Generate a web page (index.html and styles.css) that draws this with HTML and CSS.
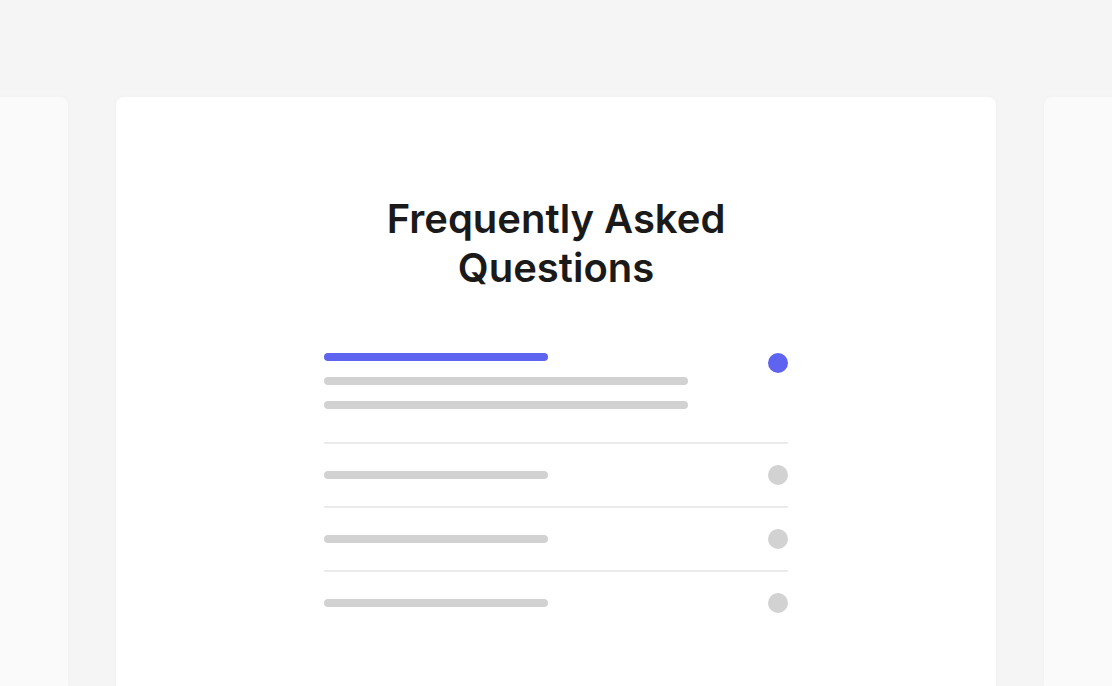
FILE: index.html
```html
<!DOCTYPE html>
<html lang="en">
<head>
<meta charset="utf-8">
<title>FAQ</title>
<link rel="stylesheet" href="styles.css">
</head>
<body>
<div class="stage">
  <div class="card card-side"></div>
  <div class="card card-main">
    <h1 class="title">Frequently Asked Questions</h1>
    <div class="faq">
      <div class="faq-item faq-open">
        <div class="faq-lines">
          <div class="bar bar-accent bar-short"></div>
          <div class="bar bar-long"></div>
          <div class="bar bar-long"></div>
        </div>
        <div class="dot dot-accent"></div>
      </div>
      <div class="faq-item">
        <div class="bar bar-short"></div>
        <div class="dot"></div>
      </div>
      <div class="faq-item">
        <div class="bar bar-short"></div>
        <div class="dot"></div>
      </div>
      <div class="faq-item">
        <div class="bar bar-short"></div>
        <div class="dot"></div>
      </div>
    </div>
  </div>
  <div class="card card-side"></div>
</div>
</body>
</html>
```

FILE: styles.css
```css
* { box-sizing: border-box; }
html, body {
  margin: 0;
  height: 100%;
}
body {
  background: #f5f5f5;
  overflow: hidden;
  font-family: Inter, "Liberation Sans", sans-serif;
}
.stage {
  display: flex;
  justify-content: center;
  gap: 48px;
  padding-top: 97px;
  height: 100%;
  overflow: hidden;
}
.card {
  flex: 0 0 880px;
  width: 880px;
  height: 589px;
  border-radius: 8px 8px 0 0;
  box-shadow: 0 0 6px rgba(0, 0, 0, 0.025);
}
.card-side {
  background: #fafafa;
}
.card-main {
  background: #ffffff;
  display: flex;
  flex-direction: column;
  align-items: center;
  padding-top: 97px;
}
.title {
  margin: 0;
  width: 440px;
  text-align: center;
  font-size: 40px;
  font-weight: 600;
  line-height: 49px;
  color: #1a1a1a;
}
.faq {
  width: 464px;
  margin-top: 61px;
  display: flex;
  flex-direction: column;
}
.faq-item {
  display: flex;
  align-items: center;
  justify-content: space-between;
  padding: 21px 0;
  border-top: 2px solid #ebebeb;
}
.faq-open {
  align-items: flex-start;
  border-top: none;
  padding: 0 0 33px;
}
.faq-lines {
  display: flex;
  flex-direction: column;
  gap: 16px;
}
.bar {
  height: 8px;
  border-radius: 4px;
  background: #d2d2d2;
}
.bar-short { width: 224px; }
.bar-long { width: 364px; }
.bar-accent { background: #5e64f0; }
.dot {
  width: 20px;
  height: 20px;
  border-radius: 50%;
  background: #d2d2d2;
  flex: 0 0 20px;
}
.dot-accent { background: #5e64f0; }
```
